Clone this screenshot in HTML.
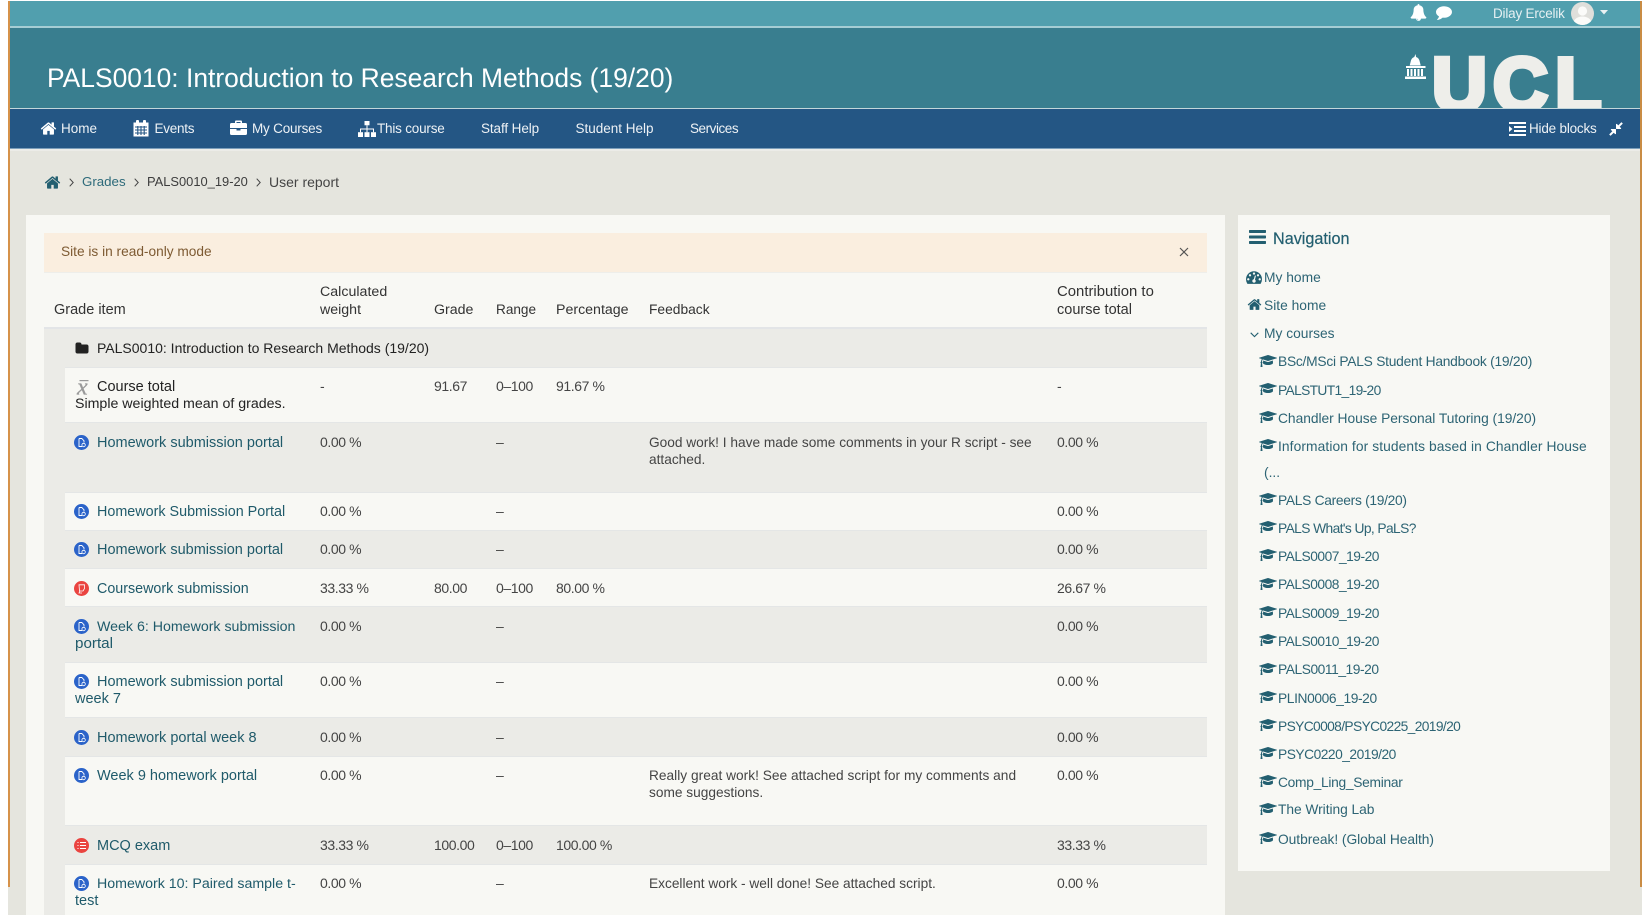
<!DOCTYPE html>
<html><head><meta charset="utf-8"><title>Grades</title>
<style>
html,body{margin:0;padding:0;background:#fff;width:1646px;height:922px;overflow:hidden}
#p{position:relative;width:1646px;height:922px;overflow:hidden;font-family:"Liberation Sans",sans-serif;font-size:14.5px;color:#333}
#p div.b,#p svg{position:absolute}
.t{position:absolute;white-space:nowrap;line-height:18px}
.l{color:#1f5a6a;margin-top:2px}
.n{font-size:14px;letter-spacing:-.4px;color:#444;margin-top:1px}
.h{color:#333;margin-top:2px;font-size:14.2px}
.m{font-size:13.5px;color:#fff;opacity:.92;margin-top:1px}
.s{font-size:13.8px;color:#2d6474;margin-top:2px}
.f{font-size:13.7px;color:#444;margin-top:2px}
.k{color:#222;margin-top:2px}
.r{position:absolute;left:65px;width:1142px;background:#f8f8f4;border-top:1px solid #e4e6e6;box-sizing:border-box}
.a{background:#ebebe7}
</style></head><body><div id="p">
<svg width="0" height="0" style="position:absolute"><defs>
<symbol id="cap" viewBox="0 0 2304 1792"><path d="M1774 836l18 316q4 69-82 128t-235 93.500-323 34.500-323-34.500-235-93.500-82-128l18-316 574 181q22 7 48 7t48-7zm530-324q0 23-22 31l-1120 352q-4 1-10 1t-10-1l-652-206q-43 34-71 111.500t-34 178.500q63 36 63 109 0 69-58 107l58 433q2 14-8 25-9 11-24 11h-192q-15 0-24-11-10-11-8-25l58-433q-58-38-58-107 0-73 65-111 11-207 98-330l-333-104q-22-8-22-31t22-31l1120-352q4-1 10-1t10 1l1120 352q22 8 22 31z"/></symbol>
<symbol id="home" viewBox="0 0 1792 1792"><path d="M1472 992v480q0 26-19 45t-45 19h-384v-384h-256v384h-384q-26 0-45-19t-19-45v-480q0-1 .5-3t.5-3l575-474 575 474q1 2 1 6zm223-69l-62 74q-8 9-21 11h-3q-13 0-21-7l-692-577-692 577q-12 8-24 7-13-2-21-11l-62-74q-8-10-7-23.500t11-21.500l719-599q32-26 76-26t76 26l244 204v-195q0-14 9-23t23-9h192q14 0 23 9t9 23v408l219 182q10 8 11 21.500t-7 23.500z"/></symbol>
<symbol id="bl" viewBox="0 0 15 15"><circle cx="7.500" cy="7.500" r="7.500" fill="#2b63c9"/><path d="M5 3.500h2.800l2.200 2.300v1.700M5 3.500v8h3" fill="none" stroke="#fff" stroke-width=".9"/><circle cx="9.600" cy="10" r="1.700" fill="none" stroke="#fff" stroke-width=".8"/></symbol>
<symbol id="rd" viewBox="0 0 15 15"><circle cx="7.500" cy="7.500" r="7.500" fill="#ea4440"/><path d="M5 3.800h5.500v3.700l-1.500 2.500h-3.500zM6 10l-1 2h3" fill="none" stroke="#fff" stroke-width=".8"/></symbol>
<symbol id="qz" viewBox="0 0 15 15"><circle cx="7.500" cy="7.500" r="7.500" fill="#ea4440"/><path d="M6 4.500h6M6 7.500h6M6 10.500h6M3.500 4.500h1M3.500 7.500h1M3.500 10.500h1" fill="none" stroke="#fff" stroke-width=".9"/></symbol>
</defs></svg>

<!-- page background -->
<div class="b" style="left:8px;top:1px;width:1634px;height:914px;background:#e5e5de"></div>
<div class="b" style="left:8px;top:1px;width:2px;height:886px;background:#d6924a"></div>
<div class="b" style="left:1640px;top:1px;width:2px;height:886px;background:#c98c44"></div>

<!-- top bar -->
<div class="b" style="left:10px;top:1px;width:1630px;height:25px;background:#519fae"></div>
<div class="b" style="left:10px;top:26px;width:1630px;height:2px;background:#a5cdd4"></div>
<!-- header -->
<div class="b" style="left:10px;top:28px;width:1630px;height:80px;background:#397e8f"></div>
<div class="b" style="left:10px;top:108px;width:1630px;height:1px;background:#c3d6da"></div>
<!-- nav -->
<div class="b" style="left:10px;top:109px;width:1630px;height:39px;background:#245684"></div>
<div class="b" style="left:10px;top:148px;width:1630px;height:1px;background:#7d9fbb"></div>
<div class="b" style="left:10px;top:149px;width:1630px;height:2px;background:#ecece8"></div>

<div class="t" style="left:47px;top:62px;font-size:26.420px;line-height:32px;color:#fff">PALS0010: Introduction to Research Methods (19/20)</div>

<!-- top right -->
<svg style="left:1410px;top:4px" width="17" height="17" viewBox="0 0 1792 1792" fill="#fff"><path d="M912 1696q0-16-16-16-59 0-101.500-42.500t-42.500-101.500q0-16-16-16t-16 16q0 73 51.500 124.500t124.500 51.500q16 0 16-16zm816-288q0 52-38 90t-90 38h-448q0 106-75 181t-181 75-181-75-75-181h-448q-52 0-90-38t-38-90q50-42 91-88t85-119.500 74.500-158.500 50-206 19.500-260q0-152 117-282.500t307-158.500q-8-19-8-39 0-40 28-68t68-28 68 28 28 68q0 20-8 39 190 28 307 158.500t117 282.500q0 139 19.500 260t50 206 74.500 158.500 85 119.500 91 88z"/></svg>
<svg style="left:1436px;top:4px" width="16" height="16" viewBox="0 0 1792 1792" fill="#fff"><path d="M1792 896q0 174-120 321.500t-326 233-450 85.500q-70 0-145-8-198 175-460 242-49 14-114 22-17 2-30.500-9t-17.500-29v-1q-3-4-.5-12t2-10 4.500-9.500l6-9 7-8.500 8-9q7-8 31-34.500t34.500-38 31-39.500 32.500-51 27-59 26-76q-157-89-247.500-220t-90.500-281q0-130 71-248.500t191-204.500 286-136.500 348-50.500q244 0 450 85.500t326 233 120 321.500z"/></svg>
<div class="t" style="left:1493px;top:5px;font-size:13.500px;letter-spacing:-.2px;color:#e6f0f2">Dilay Ercelik</div>
<svg style="left:1571px;top:2px" width="23" height="23" viewBox="0 0 23 23"><defs><clipPath id="av"><circle cx="11.500" cy="11.500" r="11.500"/></clipPath></defs><circle cx="11.500" cy="11.500" r="11.500" fill="#dfdfdb"/><g clip-path="url(#av)" fill="#fbfbf9"><circle cx="11.500" cy="9" r="4.600"/><ellipse cx="11.500" cy="21" rx="9" ry="6.500"/></g></svg>
<svg style="left:1600px;top:10px" width="8" height="5" viewBox="0 0 8 5"><path d="M0 0h8l-4 4.500z" fill="#e9f1f3"/></svg>

<!-- UCL logo -->
<svg style="left:1400px;top:40px" width="210" height="68" viewBox="1400 40 210 68">
<g fill="#fff"><path d="M1415.500 54l.6 3q2.800 .8 3.600 4.500l1 4h-11l1-4q.8-3.700 3.600-4.500z"/><rect x="1406" y="66" width="19.500" height="2"/><rect x="1407" y="69" width="2" height="7"/><rect x="1410.500" y="69" width="2" height="7"/><rect x="1414" y="69" width="2" height="7"/><rect x="1417.500" y="69" width="2" height="7"/><rect x="1421" y="69" width="2" height="7"/><rect x="1405" y="76.500" width="21" height="2.500"/></g>
<g font-family="Liberation Sans" font-weight="700" font-size="76" fill="#eeeeea" stroke="#eeeeea" stroke-width="5">
<text x="1432" y="111">U</text><text x="1493" y="111">C</text><text x="1555" y="111">L</text></g></svg>

<!-- nav items -->
<svg style="left:40px;top:120px" width="17" height="17" fill="#fff"><use href="#home"/></svg>
<div class="t m" style="left:61px;top:119px">Home</div>
<svg style="left:133px;top:119px" width="16" height="18" viewBox="0 0 16 18"><path d="M.5 3.500h15v14H.5z" fill="#fff"/><rect x="3" y="1" width="3" height="4.500" rx="1" fill="#fff"/><rect x="10" y="1" width="3" height="4.500" rx="1" fill="#fff"/><path d="M2 8h12M2 11h12M2 14h12M4.800 7v9M8 7v9M11.200 7v9" stroke="#245684" stroke-width="1.100" fill="none"/></svg>
<div class="t m" style="left:154.500px;top:119px;letter-spacing:-.25px">Events</div>
<svg style="left:230px;top:120px" width="17" height="15" viewBox="0 0 17 15"><path d="M5 3V1.500Q5 .5 6 .5h5q1 0 1 1V3h3.500q1.500 0 1.500 1.500V8H0V4.500Q0 3 1.500 3zM6.500 3h4V2h-4z M0 9h6.500v1.500h4V9H17v4.500Q17 15 15.500 15h-14Q0 15 0 13.500z" fill="#fff" fill-rule="evenodd"/></svg>
<div class="t m" style="left:252px;top:119px;letter-spacing:-.2px">My Courses</div>
<svg style="left:358px;top:121px" width="18" height="16" viewBox="0 0 18 15" fill="#fff" preserveAspectRatio="none"><rect x="6.500" y="0" width="5" height="4"/><rect x="0" y="10.500" width="5" height="4.500"/><rect x="6.500" y="10.500" width="5" height="4.500"/><rect x="13" y="10.500" width="5" height="4.500"/><path d="M8.500 4h1v3h6.500v3.500h-1V8h-5.500v2.500h-1V8H3v2.500H2V7h6.500z"/></svg>
<div class="t m" style="left:377px;top:119px;letter-spacing:-.2px">This course</div>
<div class="t m" style="left:481px;top:119px;letter-spacing:-.1px">Staff Help</div>
<div class="t m" style="left:575.500px;top:119px">Student Help</div>
<div class="t m" style="left:690px;top:119px;letter-spacing:-.45px">Services</div>
<svg style="left:1509px;top:122px" width="17" height="14" viewBox="0 0 17 14" fill="#fff"><rect width="17" height="2"/><rect y="12" width="17" height="2"/><rect x="5" y="4" width="12" height="2"/><rect x="5" y="8" width="12" height="2"/><path d="M0 4l3.500 3L0 10z"/></svg>
<div class="t m" style="left:1529px;top:119px;letter-spacing:-.2px">Hide blocks</div>
<svg style="left:1608px;top:121px" width="16" height="16" viewBox="0 0 1792 1792" fill="#fff"><path d="M896 960v448q0 26-19 45t-45 19-45-19l-144-144-332 332q-10 10-23 10t-23-10l-114-114q-10-10-10-23t10-23l332-332-144-144q-19-19-19-45t19-45 45-19h448q26 0 45 19t19 45zm755-672q0 13-10 23l-332 332 144 144q19 19 19 45t-19 45-45 19h-448q-26 0-45-19t-19-45v-448q0-26 19-45t45-19 45 19l144 144 332-332q10-10 23-10t23 10l114 114q10 10 10 23z"/></svg>

<!-- breadcrumb -->
<svg style="left:44px;top:174px" width="17" height="17" fill="#235f70"><use href="#home"/></svg>
<svg style="left:69px;top:178px" width="5" height="9" viewBox="0 0 5 9"><path d="M.7 .7l3.500 3.800L.7 8.300" fill="none" stroke="#444" stroke-width="1"/></svg>
<div class="t" style="left:82px;top:173px;font-size:13.300px;color:#2d6a7a">Grades</div>
<svg style="left:134px;top:178px" width="5" height="9" viewBox="0 0 5 9"><path d="M.7 .7l3.500 3.800L.7 8.300" fill="none" stroke="#444" stroke-width="1"/></svg>
<div class="t" style="left:147px;top:173px;font-size:12.900px;color:#3d3d3d">PALS0010_19-20</div>
<svg style="left:256px;top:178px" width="5" height="9" viewBox="0 0 5 9"><path d="M.7 .7l3.500 3.800L.7 8.300" fill="none" stroke="#444" stroke-width="1"/></svg>
<div class="t" style="left:269px;top:173px;font-size:14px;color:#444">User report</div>

<!-- main panel -->
<div class="b" style="left:26px;top:215px;width:1199px;height:700px;background:#f8f8f4"></div>
<div class="b" style="left:44px;top:233px;width:1163px;height:39px;background:#faeedf;border-bottom:1px solid #eeeeea"></div>
<div class="t" style="left:61px;top:243px;font-size:13.700px;color:#7d5a32">Site is in read-only mode</div>
<svg style="left:1179px;top:247px" width="10" height="10" viewBox="0 0 10 10"><path d="M1 1l8 8M9 1l-8 8" stroke="#555" stroke-width="1.200"/></svg>

<!-- table header -->
<div class="t h" style="left:54px;top:299px;font-size:14.500px">Grade item</div>
<div class="t h" style="left:320px;top:281px;letter-spacing:.02px">Calculated</div>
<div class="t h" style="left:320px;top:299px">weight</div>
<div class="t h" style="left:434px;top:299px">Grade</div>
<div class="t h" style="left:496px;top:299px;font-size:13.600px">Range</div>
<div class="t h" style="left:556px;top:299px">Percentage</div>
<div class="t h" style="left:649px;top:299px;font-size:13.800px">Feedback</div>
<div class="t h" style="left:1057px;top:281px;font-size:14.900px">Contribution to</div>
<div class="t h" style="left:1057px;top:299px;font-size:14.500px">course total</div>
<div class="b" style="left:44px;top:327px;width:1163px;height:2px;background:#e3e5e7"></div>

<!-- rows -->
<div class="b" style="left:44px;top:329px;width:1163px;height:586px;background:#ebebe7"></div>
<div class="r" style="top:367px;height:55px"></div>
<div class="r a" style="top:422px;height:70px"></div>
<div class="r" style="top:492px;height:38px"></div>
<div class="r a" style="top:530px;height:38px"></div>
<div class="r" style="top:568px;height:38px"></div>
<div class="r a" style="top:606px;height:56px"></div>
<div class="r" style="top:662px;height:55px"></div>
<div class="r a" style="top:717px;height:39px"></div>
<div class="r" style="top:756px;height:69px"></div>
<div class="r a" style="top:825px;height:39px"></div>
<div class="r" style="top:864px;height:51px"></div>

<svg style="left:75px;top:342px" width="14" height="13" viewBox="0 0 1792 1664" preserveAspectRatio="none" fill="#222"><path transform="translate(0 -64)" d="M1728 608v704q0 92-66 158t-158 66h-1216q-92 0-158-66t-66-158v-960q0-92 66-158t158-66h320q92 0 158 66t66 158v32h672q92 0 158 66t66 158z"/></svg>
<div class="t k" style="left:97px;top:337px;font-size:14px">PALS0010: Introduction to Research Methods (19/20)</div>

<svg style="left:75px;top:379px" width="16" height="18" viewBox="0 0 16 18"><rect x="4.500" y="1" width="9" height="1.200" fill="#999"/><text x="2" y="15.500" font-family="Liberation Serif" font-style="italic" font-size="24" fill="#999" stroke="#999" stroke-width=".3">x</text></svg>
<div class="t k" style="left:97px;top:376px">Course total</div>
<div class="t k" style="left:75px;top:393px;font-size:14.200px">Simple weighted mean of grades.</div>
<div class="t n" style="left:320px;top:376px">-</div>
<div class="t n" style="left:434px;top:376px">91.67</div>
<div class="t n" style="left:496px;top:376px">0–100</div>
<div class="t n" style="left:556px;top:376px">91.67 %</div>
<div class="t n" style="left:1057px;top:376px">-</div>

<svg style="left:74px;top:435px" width="15" height="15"><use href="#bl"/></svg>
<div class="t l" style="left:97px;top:432px">Homework submission portal</div>
<div class="t n" style="left:320px;top:432px">0.00 %</div>
<div class="t n" style="left:496px;top:432px">–</div>
<div class="t f" style="left:649px;top:432px">Good work! I have made some comments in your R script - see</div>
<div class="t f" style="left:649px;top:449px">attached.</div>
<div class="t n" style="left:1057px;top:432px">0.00 %</div>

<svg style="left:74px;top:504px" width="15" height="15"><use href="#bl"/></svg>
<div class="t l" style="left:97px;top:501px;font-size:14.350px">Homework Submission Portal</div>
<div class="t n" style="left:320px;top:501px">0.00 %</div>
<div class="t n" style="left:496px;top:501px">–</div>
<div class="t n" style="left:1057px;top:501px">0.00 %</div>

<svg style="left:74px;top:542px" width="15" height="15"><use href="#bl"/></svg>
<div class="t l" style="left:97px;top:539px">Homework submission portal</div>
<div class="t n" style="left:320px;top:539px">0.00 %</div>
<div class="t n" style="left:496px;top:539px">–</div>
<div class="t n" style="left:1057px;top:539px">0.00 %</div>

<svg style="left:74px;top:581px" width="15" height="15"><use href="#rd"/></svg>
<div class="t l" style="left:97px;top:578px;font-size:14.300px">Coursework submission</div>
<div class="t n" style="left:320px;top:578px">33.33 %</div>
<div class="t n" style="left:434px;top:578px">80.00</div>
<div class="t n" style="left:496px;top:578px">0–100</div>
<div class="t n" style="left:556px;top:578px">80.00 %</div>
<div class="t n" style="left:1057px;top:578px">26.67 %</div>

<svg style="left:74px;top:619px" width="15" height="15"><use href="#bl"/></svg>
<div class="t l" style="left:97px;top:616px;font-size:14.200px">Week 6: Homework submission</div>
<div class="t l" style="left:75px;top:633px;font-size:15.200px">portal</div>
<div class="t n" style="left:320px;top:616px">0.00 %</div>
<div class="t n" style="left:496px;top:616px">–</div>
<div class="t n" style="left:1057px;top:616px">0.00 %</div>

<svg style="left:74px;top:674px" width="15" height="15"><use href="#bl"/></svg>
<div class="t l" style="left:97px;top:671px">Homework submission portal</div>
<div class="t l" style="left:75px;top:688px">week 7</div>
<div class="t n" style="left:320px;top:671px">0.00 %</div>
<div class="t n" style="left:496px;top:671px">–</div>
<div class="t n" style="left:1057px;top:671px">0.00 %</div>

<svg style="left:74px;top:730px" width="15" height="15"><use href="#bl"/></svg>
<div class="t l" style="left:97px;top:727px">Homework portal week 8</div>
<div class="t n" style="left:320px;top:727px">0.00 %</div>
<div class="t n" style="left:496px;top:727px">–</div>
<div class="t n" style="left:1057px;top:727px">0.00 %</div>

<svg style="left:74px;top:768px" width="15" height="15"><use href="#bl"/></svg>
<div class="t l" style="left:97px;top:765px">Week 9 homework portal</div>
<div class="t n" style="left:320px;top:765px">0.00 %</div>
<div class="t n" style="left:496px;top:765px">–</div>
<div class="t f" style="left:649px;top:765px;letter-spacing:.02px">Really great work! See attached script for my comments and</div>
<div class="t f" style="left:649px;top:782px">some suggestions.</div>
<div class="t n" style="left:1057px;top:765px">0.00 %</div>

<svg style="left:74px;top:838px" width="15" height="15"><use href="#qz"/></svg>
<div class="t l" style="left:97px;top:835px">MCQ exam</div>
<div class="t n" style="left:320px;top:835px">33.33 %</div>
<div class="t n" style="left:434px;top:835px">100.00</div>
<div class="t n" style="left:496px;top:835px">0–100</div>
<div class="t n" style="left:556px;top:835px">100.00 %</div>
<div class="t n" style="left:1057px;top:835px">33.33 %</div>

<svg style="left:74px;top:876px" width="15" height="15"><use href="#bl"/></svg>
<div class="t l" style="left:97px;top:873px;font-size:14.200px">Homework 10: Paired sample t-</div>
<div class="t l" style="left:75px;top:890px">test</div>
<div class="t n" style="left:320px;top:873px">0.00 %</div>
<div class="t n" style="left:496px;top:873px">–</div>
<div class="t f" style="left:649px;top:873px">Excellent work - well done! See attached script.</div>
<div class="t n" style="left:1057px;top:873px">0.00 %</div>

<!-- sidebar -->
<div class="b" style="left:1238px;top:215px;width:372px;height:656px;background:#f8f8f4"></div>
<svg style="left:1249px;top:230px" width="17" height="14" fill="#235f70"><rect width="17" height="3" rx=".7"/><rect y="5.500" width="17" height="3" rx=".7"/><rect y="11" width="17" height="3" rx=".7"/></svg>
<div class="t" style="left:1273px;top:230px;font-size:16.200px;color:#235f70;-webkit-text-stroke:.2px #235f70">Navigation</div>
<svg style="left:1246px;top:269px" width="16" height="16" viewBox="0 0 1792 1792" fill="#235f70"><path d="M384 1152q0-53-37.500-90.500t-90.500-37.500-90.500 37.500-37.500 90.500 37.500 90.500 90.500 37.500 90.500-37.500 37.500-90.500zm192-448q0-53-37.500-90.500t-90.500-37.500-90.500 37.500-37.500 90.500 37.500 90.500 90.500 37.500 90.500-37.500 37.500-90.500zm428 481l101-382q6-26-7.500-48.500t-38.500-29.500-48 6.500-30 39.500l-101 382q-60 5-107 43.500t-63 98.500q-20 77 20 146t117 89 146-20 89-117q16-60-6-117t-72-91zm660-33q0-53-37.500-90.500t-90.500-37.500-90.500 37.500-37.500 90.500 37.500 90.500 90.500 37.500 90.500-37.500 37.500-90.500zm-640-640q0-53-37.500-90.500t-90.500-37.500-90.500 37.500-37.500 90.500 37.500 90.500 90.500 37.500 90.500-37.500 37.500-90.500zm448 192q0-53-37.500-90.500t-90.500-37.500-90.500 37.500-37.500 90.500 37.500 90.500 90.500 37.500 90.500-37.500 37.500-90.500zm320 448q0 261-141 483-19 29-54 29h-1402q-35 0-54-29-141-221-141-483 0-182 71-348t191-286 286-191 348-71 348 71 286 191 191 286 71 348z"/></svg>
<div class="t s" style="left:1264px;top:267px">My home</div>
<svg style="left:1247px;top:297px" width="15" height="15" fill="#235f70"><use href="#home"/></svg>
<div class="t s" style="left:1264px;top:295px">Site home</div>
<svg style="left:1250px;top:332px" width="9" height="6" viewBox="0 0 9 6"><path d="M.7 .8l3.800 3.800L8.300 .8" fill="none" stroke="#235f70" stroke-width="1.100"/></svg>
<div class="t s" style="left:1264px;top:323px">My courses</div>

<svg style="left:1259px;top:354px" width="18" height="14" fill="#235f70"><use href="#cap"/></svg><div class="t s" style="left:1278px;top:351px;letter-spacing:-.25px">BSc/MSci PALS Student Handbook (19/20)</div>
<svg style="left:1259px;top:382px" width="18" height="14" fill="#235f70"><use href="#cap"/></svg><div class="t s" style="left:1278px;top:380px;letter-spacing:-.65px">PALSTUT1_19-20</div>
<svg style="left:1259px;top:410px" width="18" height="14" fill="#235f70"><use href="#cap"/></svg><div class="t s" style="left:1278px;top:408px;letter-spacing:-.03px">Chandler House Personal Tutoring (19/20)</div>
<svg style="left:1259px;top:438px" width="18" height="14" fill="#235f70"><use href="#cap"/></svg><div class="t s" style="left:1278px;top:436px;letter-spacing:.09px">Information for students based in Chandler House</div>
<div class="t s" style="left:1264px;top:462px">(...</div>
<svg style="left:1259px;top:492px" width="18" height="14" fill="#235f70"><use href="#cap"/></svg><div class="t s" style="left:1278px;top:490px;letter-spacing:-.3px">PALS Careers (19/20)</div>
<svg style="left:1259px;top:520px" width="18" height="14" fill="#235f70"><use href="#cap"/></svg><div class="t s" style="left:1278px;top:518px;letter-spacing:-.6px">PALS What's Up, PaLS?</div>
<svg style="left:1259px;top:548px" width="18" height="14" fill="#235f70"><use href="#cap"/></svg><div class="t s" style="left:1278px;top:546px;letter-spacing:-.5px">PALS0007_19-20</div>
<svg style="left:1259px;top:577px" width="18" height="14" fill="#235f70"><use href="#cap"/></svg><div class="t s" style="left:1278px;top:574px;letter-spacing:-.5px">PALS0008_19-20</div>
<svg style="left:1259px;top:605px" width="18" height="14" fill="#235f70"><use href="#cap"/></svg><div class="t s" style="left:1278px;top:603px;letter-spacing:-.5px">PALS0009_19-20</div>
<svg style="left:1259px;top:633px" width="18" height="14" fill="#235f70"><use href="#cap"/></svg><div class="t s" style="left:1278px;top:631px;letter-spacing:-.5px">PALS0010_19-20</div>
<svg style="left:1259px;top:662px" width="18" height="14" fill="#235f70"><use href="#cap"/></svg><div class="t s" style="left:1278px;top:659px;letter-spacing:-.45px">PALS0011_19-20</div>
<svg style="left:1259px;top:690px" width="18" height="14" fill="#235f70"><use href="#cap"/></svg><div class="t s" style="left:1278px;top:688px;letter-spacing:-.4px">PLIN0006_19-20</div>
<svg style="left:1259px;top:718px" width="18" height="14" fill="#235f70"><use href="#cap"/></svg><div class="t s" style="left:1278px;top:716px;letter-spacing:-.63px">PSYC0008/PSYC0225_2019/20</div>
<svg style="left:1259px;top:746px" width="18" height="14" fill="#235f70"><use href="#cap"/></svg><div class="t s" style="left:1278px;top:744px;letter-spacing:-.5px">PSYC0220_2019/20</div>
<svg style="left:1259px;top:774px" width="18" height="14" fill="#235f70"><use href="#cap"/></svg><div class="t s" style="left:1278px;top:772px;letter-spacing:-.3px">Comp_Ling_Seminar</div>
<svg style="left:1259px;top:802px" width="18" height="14" fill="#235f70"><use href="#cap"/></svg><div class="t s" style="left:1278px;top:799px;letter-spacing:-.05px">The Writing Lab</div>
<svg style="left:1259px;top:831px" width="18" height="14" fill="#235f70"><use href="#cap"/></svg><div class="t s" style="left:1278px;top:829px;letter-spacing:-.05px">Outbreak! (Global Health)</div>
</div></body></html>
